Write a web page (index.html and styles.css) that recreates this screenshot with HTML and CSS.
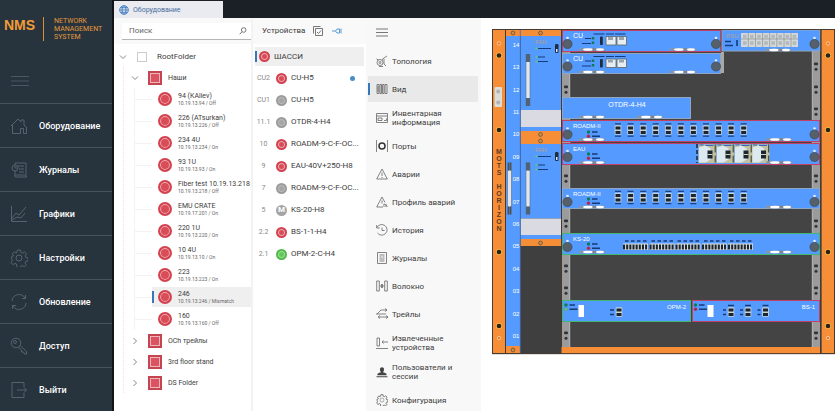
FILE: index.html
```html
<!DOCTYPE html>
<html lang="ru">
<head>
<meta charset="utf-8">
<meta name="viewport" content="width=device-width, initial-scale=1">
<title>NMS</title>
<link rel="stylesheet" href="styles.css">
</head>
<body>
<div class="app">
  <aside class="sidebar">
    <div class="brand"><span class="brand-mark">NMS</span><span class="brand-name">NETWORK<br>MANAGEMENT<br>SYSTEM</span></div>
    <button class="burger" type="button" aria-label="Меню"><svg width="18" height="12" viewBox="0 0 18 12"><path d="M0 1.500h18M0 6h18M0 10.500h18"/></svg></button>
    <nav class="main-nav">
      <a href="#"><svg class="ico" viewBox="0 0 18 18"><path d="M1 9 8 2l3 3V3h3v5l3 3M2.500 8v8.500h8v-5h3v5h3V11"/></svg>Оборудование</a>
      <a href="#"><svg class="ico" viewBox="0 0 18 18"><path d="M5 4V2h11v12M5 10v4h9.500q2 0 2 2H6q-1.500 0-1.500-2M8 5h6M9 8h5M9 11h5"/><circle cx="5" cy="7" r="3"/><path d="M5 5v2h2"/></svg>Журналы</a>
      <a href="#"><svg class="ico" viewBox="0 0 18 18"><path d="M1.500 1v15.500H17M2 13l4-5 3 2 7-8M2 15l5-3 4 1 4-5"/></svg>Графики</a>
      <a href="#"><svg class="ico" viewBox="0 0 18 18"><path d="M7.500 1h3l.5 2.500 1.500.6 2-1.300 2 2-1.300 2 .6 1.600 2.200.5v3l-2.400.5-.6 1.500 1.300 2-2 2-2-1.300-1.500.6-.6 2.300h-3L6.500 15 5 14.400 3 15.700l-2-2 1.300-2L1.700 10V7.500l2-.8L2.300 4.800l2-2 2 1.300z"/><circle cx="9" cy="9" r="3"/></svg>Настройки</a>
      <a href="#"><svg class="ico" viewBox="0 0 18 18"><path d="M2 8a7 7 0 0 1 13-3M16 10a7 7 0 0 1-13 3M15.500 2v3.500H12M2.500 16v-3.500H6"/></svg>Обновление</a>
      <a href="#"><svg class="ico" viewBox="0 0 18 18"><circle cx="6" cy="6" r="4.800"/><circle cx="5" cy="5" r="1.500"/><path d="m10 8.500 6.500 6v2.500h-2l-1-2h-2v-2L8.500 10.500"/></svg>Доступ</a>
      <a href="#"><svg class="ico" viewBox="0 0 18 18"><path d="M14 6V1.500H2v15h12V12M7 9h9.500M14 6.500 16.500 9 14 11.500"/></svg>Выйти</a>
    </nav>
  </aside>

  <div class="workspace">
    <header class="tabs">
      <a class="tab" href="#"><svg width="10" height="10" viewBox="0 0 10 10"><circle cx="5" cy="5" r="4.300"/><ellipse cx="5" cy="5" rx="2" ry="4.300"/><path d="M.7 5h8.600M1.500 2.700h7M1.500 7.300h7"/></svg>Оборудование</a>
    </header>
    <div class="panels">
      <section class="tree-panel">
        <div class="tree-head">
          <label class="search"><input type="text" placeholder="Поиск" aria-label="Поиск"><svg width="8" height="8" viewBox="0 0 8 8"><circle cx="4.700" cy="3" r="2.300"/><path d="M3 4.700.7 7.300"/></svg></label>
          <button type="button" class="plain" aria-label="Фильтр"><svg width="10" height="10" viewBox="0 0 10 10"><circle cx="5" cy="5" r="4.300"/><path d="M3 8.200h4"/></svg></button>
        </div>
        <ul class="tree">
          <li>
            <div class="row root"><button type="button" class="chev" aria-label="Свернуть"><svg viewBox="0 0 8 8"><path d="m1 2.500 3 3 3-3"/></svg></button><input type="checkbox" id="root"><label for="root">RootFolder</label></div>
            <ul class="folders">
              <li>
                <div class="row folder"><button type="button" class="chev" aria-label="Свернуть"><svg viewBox="0 0 8 8"><path d="m1 2.500 3 3 3-3"/></svg></button><i class="sq"></i>Наши</div>
                <ul class="leaves">
                  <li><a href="#"><i class="dot"></i><span>94 (KAliev)<small>10.19.13.94 / Off</small></span></a></li>
                  <li><a href="#"><i class="dot"></i><span>226 (ATsurkan)<small>10.19.13.226 / Off</small></span></a></li>
                  <li><a href="#"><i class="dot"></i><span>234 4U<small>10.19.13.234 / On</small></span></a></li>
                  <li><a href="#"><i class="dot"></i><span>93 1U<small>10.19.13.93 / On</small></span></a></li>
                  <li><a href="#"><i class="dot"></i><span>Fiber test 10.19.13.218<small>10.19.13.218 / Off</small></span></a></li>
                  <li><a href="#"><i class="dot"></i><span>EMU CRATE<small>10.19.17.201 / On</small></span></a></li>
                  <li><a href="#"><i class="dot"></i><span>220 1U<small>10.19.13.220 / On</small></span></a></li>
                  <li><a href="#"><i class="dot"></i><span>10 4U<small>10.19.13.10 / On</small></span></a></li>
                  <li><a href="#"><i class="dot"></i><span>223<small>10.19.13.223 / On</small></span></a></li>
                  <li><a href="#" class="selected"><i class="dot"></i><span>246<small>10.19.13.246 / Mismatch</small></span></a></li>
                  <li><a href="#"><i class="dot"></i><span>160<small>10.19.13.160 / Off</small></span></a></li>
                </ul>
              </li>
              <li><div class="row folder"><button type="button" class="chev" aria-label="Развернуть"><svg viewBox="0 0 8 8"><path d="m2.500 1 3 3-3 3"/></svg></button><i class="sq"></i>OCh трейлы</div></li>
              <li><div class="row folder"><button type="button" class="chev" aria-label="Развернуть"><svg viewBox="0 0 8 8"><path d="m2.500 1 3 3-3 3"/></svg></button><i class="sq"></i>3rd floor stand</div></li>
              <li><div class="row folder"><button type="button" class="chev" aria-label="Развернуть"><svg viewBox="0 0 8 8"><path d="m2.500 1 3 3-3 3"/></svg></button><i class="sq"></i>DS Folder</div></li>
            </ul>
          </li>
        </ul>
      </section>

      <section class="devices">
        <div class="dev-head"><h2>Устройства</h2>
          <button type="button" class="plain" aria-label="Выбрать"><svg width="10" height="10" viewBox="0 0 10 10"><path d="M2.500 2.500h7v7h-7zM.5 7.500v-7h7M4 6l1.500 1.500L8 4.500"/></svg></button>
          <button type="button" class="plain blue" aria-label="Подключение"><svg width="10" height="10" viewBox="0 0 10 10"><path d="M0 5h3.500M3.500 5 5 3h2.500v4H5zM9 2.500v5"/></svg></button>
        </div>
        <ul class="dev-list">
          <li class="chassis"><a href="#" class="selected"><i class="dot"></i>ШАССИ</a></li>
          <li><a href="#"><b>CU2</b><i class="dot"></i>CU-H5<i class="mark"></i></a></li>
          <li><a href="#"><b>CU1</b><i class="dot gray"></i>CU-H5</a></li>
          <li><a href="#"><b>11.1</b><i class="dot gray"></i>OTDR-4-H4</a></li>
          <li><a href="#"><b>10</b><i class="dot"></i>ROADM-9-C-F-OC...</a></li>
          <li><a href="#"><b>9</b><i class="dot"></i>EAU-40V+250-H8</a></li>
          <li><a href="#"><b>7</b><i class="dot gray"></i>ROADM-9-C-F-OC...</a></li>
          <li><a href="#"><b>5</b><i class="dot letter">M</i>KS-20-H8</a></li>
          <li><a href="#"><b>2.2</b><i class="dot"></i>BS-1-1-H4</a></li>
          <li><a href="#"><b>2.1</b><i class="dot green"></i>OPM-2-C-H4</a></li>
        </ul>
      </section>

      <nav class="side-menu">
        <button class="burger" type="button" aria-label="Меню"><svg width="12" height="9" viewBox="0 0 12 9"><path d="M0 1h12M0 4.500h12M0 8h12"/></svg></button>
        <a href="#"><svg class="ico" viewBox="0 0 12 12"><circle cx="4" cy="7.500" r="3"/><circle cx="4" cy="7.500" r="1"/><path d="M5.500 5 8 3l3-2M.5 4l2 1M8 4v5l2 2M3 11.500h4"/></svg>Топология</a>
        <a href="#" class="selected"><svg class="ico" viewBox="0 0 12 12"><path d="M1 1.500h2v9H1zM4 1.500h1.500v9H4zM6.500 1.500H8v9H6.500zM9 1.500h2v9H9zM2 3v6"/></svg>Вид</a>
        <a href="#" class="two"><svg class="ico" viewBox="0 0 12 12"><path d="M.5 1.500h11v9H.5zM.5 4h11M2 6h4v2.500H2zM8 8.500h2.500v-2"/></svg>Инвентарная информация</a>
        <a href="#"><svg class="ico" viewBox="0 0 12 12"><path d="M.5 0v12M11.500 0v12"/><circle class="heavy" cx="6" cy="6" r="3"/></svg>Порты</a>
        <a href="#"><svg class="ico" viewBox="0 0 12 12"><path d="M6 1 .7 11h10.600zM6 4.500v3.500M6 9v1"/></svg>Аварии</a>
        <a href="#"><svg class="ico" viewBox="0 0 12 12"><path d="M7 11H.7L6 1l3 5.500M6 4.500v3M7 9l2-1 2.500 3M8 11V9.500M10 11V8"/></svg>Профиль аварий</a>
        <a href="#"><svg class="ico" viewBox="0 0 12 12"><path d="M1 3.500A5.300 5.300 0 1 1 1.500 9M.7 1v3h3M6 3.500v3h2.500"/></svg>История</a>
        <a href="#"><svg class="ico" viewBox="0 0 12 12"><path d="M1.500.5h9v11h-9zM3.500 3h5M3.500 5h2M6.500 5h2M3.500 7h5M3.500 9h5"/></svg>Журналы</a>
        <a href="#"><svg class="ico" viewBox="0 0 12 12"><path d="M.7 1h2.600v10H.7zM8.700 1h2.600v10H8.700zM3.500 6h1.800M6.700 6h1.800M5.500 4v4M6.500 4v4"/></svg>Волокно</a>
        <a href="#"><svg class="ico" viewBox="0 0 12 12"><path d="M0 6h10M3 9h9M1 6l4-4h6M9 .5 11 2 9 3.500M10 7.500 12 9l-2 1.500M4 7.500 2 9l2 1.500"/></svg>Трейлы</a>
        <a href="#" class="two"><svg class="ico" viewBox="0 0 12 12"><path d="M1 1h2.500v8H1zM0 11.500h12M12 5H6M7.500 3.500 6 5l1.500 1.500"/></svg>Извлеченные устройства</a>
        <a href="#" class="two"><svg class="ico solid" viewBox="0 0 12 12"><path d="M6 1.200c2.500 0 2.500 3 1 5 2.500.5 3.700 1 3.700 3H1.300c0-2 1.200-2.500 3.700-3-1.500-2-1.500-5 1-5zM.5 10.200h11v1H.5z"/></svg>Пользователи и сессии</a>
        <a href="#"><svg class="ico" viewBox="0 0 18 18"><path stroke-width="1.300" d="M7.500 1h3l.5 2.500 1.500.6 2-1.300 2 2-1.300 2 .6 1.600 2.200.5v3l-2.400.5-.6 1.500 1.300 2-2 2-2-1.300-1.500.6-.6 2.300h-3L6.500 15 5 14.400 3 15.700l-2-2 1.300-2L1.700 10V7.500l2-.8L2.300 4.800l2-2 2 1.300z"/><circle cx="9" cy="9" r="3"/></svg>Конфигурация</a>
      </nav>

      <main class="view">
        <svg class="rack" viewBox="491 28 344 327" role="img" aria-label="MOTS HORIZON">
          <defs>
            <g id="screw"><circle r="3" fill="#f5c04a"/><circle r="2.300" fill="#2a2118"/></g>
            <g id="ring"><circle r="1.700" fill="#e8742a" stroke="#ffd9b0" stroke-width=".8"/></g>
            <g id="bolt"><circle r="1.900" fill="#d98a3c" stroke="#6b5a48" stroke-width=".9"/></g>
            <g id="knob"><circle cy="-6" r="1.300" fill="#e8f0ff"/><circle r="4.600" fill="#55606b" stroke="#39434e" stroke-width=".6"/></g>
            <g id="feet"><rect x="-9" y="-1.300" width="26" height="2.600" rx="1.300" fill="#8996a6"/><ellipse rx="5" ry="1.300" fill="#fff"/><ellipse cx="12" rx="4" ry="1.300" fill="#fff"/><rect x="4.500" y="-1.300" width="3.500" height="2.600" fill="#7a8694"/></g>
            <g id="port"><rect x="-3.300" y="-4.800" width="6.600" height="9.600" rx="1" fill="#c9d3d6"/><path d="M-2.500-3.500h5v3h-5zM-2.500 1h5v3h-5z" fill="#1c2630"/></g>
            <g id="port-tall"><use href="#port"/><path d="M-3-6.200h6M-3 6.200h6" stroke="#1d3f7a" stroke-width="1.200"/></g>
            <g id="ports"><use href="#port-tall"/><use href="#port-tall" x="12.600"/><use href="#port-tall" x="25.200"/><use href="#port-tall" x="37.700"/><use href="#port-tall" x="50.300"/><use href="#port-tall" x="62.900"/><use href="#port-tall" x="75.400"/><use href="#port-tall" x="88"/><use href="#port-tall" x="100.600"/><use href="#port-tall" x="113.100"/><use href="#port-tall" x="125.700"/></g>
            <g id="leds"><circle r="1.700" fill="#0d7a58"/><circle cy="4.200" r="1.700" fill="#b5264f"/><path d="M3.500 0h5.500M3.500 4.200h8" stroke="#173a78" stroke-width="1.400"/></g>
            <g id="holes"><rect x="-2" y="-1.500" width="4" height="2.800" rx="1" fill="#30343a"/><circle cy="5.200" r="1.500" fill="#30343a"/></g>
            <g id="handle"><rect x="-2.300" width="4.600" height="52" fill="#5c7088"/><rect x="-1.700" y="8" width="3.400" height="36" fill="#e3e6ea"/><path d="M-1 0v8M1 0v8M-1 44v8M1 44v8" stroke="#3b4856" stroke-width=".7"/></g>
            <g id="fan"><text class="tan" x="-6" y="3">FAN</text><path d="M-3 7.500h13M-3 16h7M-3 20.500h10" stroke="#173a78" stroke-width="1.200"/><g fill="#5bbf94"><circle cx="-4.500" cy="7.500" r="1.200"/><circle cx="-4.500" cy="16" r="1.200"/><circle cx="-4.500" cy="20.500" r="1.200"/></g><rect x="14" y="3" width="3.500" height="9" rx="1.200" fill="#1f2c3d"/><rect x="15" y="8" width="1.500" height="3" fill="#dfe6ee"/></g>
            <g id="cu"><use href="#knob" x="567.500" y="44"/><use href="#knob" x="716" y="44"/><text class="name" x="573" y="38">CU</text><path d="M585 38.500h6M582 43.500h9" stroke="#173a78" stroke-width="1.200"/><path d="M593 37v8" stroke="#0d7a58" stroke-width="2.500" stroke-dasharray="2.500 2"/><path d="M593.500 34h32" stroke="#173a78" stroke-width="1.200" stroke-dasharray="11 1.500 8 1"/><rect x="600" y="36.500" width="2.800" height="8.500" rx=".8" fill="#1f2c3d"/><path d="M606 36.500h10v8.500h-10zM617 36.500h9.500v8.500H617z" fill="#e8edf0" stroke="#59646c" stroke-width=".8"/><path d="M608 37v3h5v-3M619 37v3h5v-3" fill="#9aa5ab"/><use href="#feet" x="588" y="49.500"/><use href="#feet" x="679" y="49.500"/></g>
            <g id="comb"><rect width="25" height="6.500" fill="#dfe5e6"/><path d="M0 3.500h25" stroke="#1c2630" stroke-width="5" stroke-dasharray="2.100 1.050"/><path d="M2-2.500h23" stroke="#173a78" stroke-width="1.300" stroke-dasharray="3.500 2.500"/></g>
            <g id="amp"><rect width="17.500" height="18.500" fill="#c2c2a2"/><path d="M.5 3 7 1l5 3v11l-5 3H.5z" fill="#dceaf0"/><path d="M1 .5h4M7 1h8" stroke="#3969b5"/><rect x="9" y="6" width="5" height="8" fill="#1c2630"/><path d="M9 10h5" stroke="#cfd3c0"/><path d="M16.700 0v8M16.700 11v7" stroke="#33372a" stroke-width="1"/></g>
          </defs>
          <rect x="492" y="29" width="343" height="325" fill="#3f3f3f"/>
          <path d="M492.500 30H505v323h-12.500zM821.500 30H834v323h-12.500zM506 30h55v6h-55zM506 346h14v7h-14zM520.500 131H561v13h-40.500zM520.500 239H561v7h-40.500zM561.500 347H820v6.500H561.500z" fill="#f58e36"/>
          <path d="M506 36h14v310h-14zM520.500 36H561v74h-40.500zM520.500 127H561v4h-40.500zM520.500 144H561v74.500h-40.500zM520.500 235H561v4h-40.500z" fill="#559bff"/>
          <path d="M520.500 110H561v17h-40.500zM520.500 218.500H561V235h-40.500z" fill="#d9dae2"/>
          <path d="M520.300 30v323" stroke="#3c6fc0" stroke-width=".8"/>
          <path d="M562 30h8v317h-8zM812 30h8v317h-8z" fill="#9b9b9b"/>
          <path d="M570 30v317M812 30v317" stroke="#d0d0d0" stroke-width=".7"/>
          <rect x="570.500" y="30" width="241" height="316.500" fill="#444"/>
          <use href="#ring" x="499" y="43.500"/><use href="#screw" x="499" y="55.500"/><use href="#screw" x="499" y="130"/><use href="#screw" x="499" y="252"/><use href="#screw" x="499" y="326"/><use href="#ring" x="499" y="338"/>
          <use href="#ring" x="828" y="43.500"/><use href="#screw" x="828" y="55.500"/><use href="#screw" x="828" y="130"/><use href="#screw" x="828" y="252"/><use href="#screw" x="828" y="326"/><use href="#ring" x="828" y="338"/>
          <rect x="494.500" y="87" width="7.500" height="20" rx="1" fill="#dcdcd8"/><circle cx="498.200" cy="91.500" r="1.900" fill="#aeb2b6"/><circle cx="498.200" cy="102.500" r="1.900" fill="#aeb2b6"/>
          <use href="#bolt" x="513" y="33"/><use href="#bolt" x="540.500" y="33"/><use href="#bolt" x="540.500" y="134.500"/><use href="#bolt" x="540.500" y="141"/><use href="#bolt" x="540.500" y="243"/><use href="#bolt" x="513" y="350"/>
          <text class="side" x="499" y="148">MOTS HORIZON</text>
          <g class="slots"><text x="516" y="46.500">14</text><text x="516" y="69">13</text><text x="516" y="91.500">12</text><text x="516" y="113.500">11</text><text x="516" y="136">10</text><text x="516" y="158.500">09</text><text x="516" y="181">08</text><text x="516" y="203.500">07</text><text x="516" y="225.500">06</text><text x="516" y="248">05</text><text x="516" y="270.500">04</text><text x="516" y="293">03</text><text x="516" y="315.500">02</text><text x="516" y="337.500">01</text></g>
          <use href="#handle" x="528" y="54"/><use href="#handle" x="528" y="162.500"/><use href="#handle" x="509.500" y="162.500"/>
          <use href="#fan" x="541" y="41"/><use href="#fan" x="541" y="149"/>
          <use href="#holes" x="566" y="87"/><use href="#holes" x="566" y="176"/><use href="#holes" x="566" y="221"/><use href="#holes" x="566" y="266"/><use href="#holes" x="566" y="288"/><use href="#holes" x="566" y="333"/>
          <use href="#holes" x="816" y="64"/><use href="#holes" x="816" y="87"/><use href="#holes" x="816" y="109"/><use href="#holes" x="816" y="176"/><use href="#holes" x="816" y="221"/><use href="#holes" x="816" y="266"/><use href="#holes" x="816" y="288"/><use href="#holes" x="816" y="333"/>
          <g class="card"><rect class="red" x="562.500" y="30.500" width="158" height="21"/><rect x="562.500" y="53.500" width="158" height="20"/><rect x="722" y="30" width="98" height="21" stroke="none"/><rect x="562.500" y="97.500" width="128" height="21"/><rect class="red" x="562.500" y="120.500" width="257" height="21"/><rect class="red" x="562.500" y="143.500" width="257" height="21"/><rect x="562.500" y="188.500" width="257" height="20"/><rect class="green" x="562.500" y="233.500" width="257" height="21"/><rect class="green" x="562.500" y="300.500" width="128" height="21"/><rect class="red" x="692.500" y="300.500" width="127" height="21"/></g>
          <rect x="721" y="52" width="3" height="21" fill="#a8a8a8"/>
          <use href="#cu"/><use href="#cu" y="22.500"/>
          <text class="tan" x="726" y="37.500">PSU</text><path d="M725 41.500h6M725 45.500h8M737 40v6" stroke="#173a78" stroke-width="1.600"/>
          <rect x="741" y="33" width="57" height="14" fill="#d4d7d8"/><path d="M748.300 33v14M755.500 33v14M762.600 33v14M769.700 33v14M776.800 33v14M784 33v14M791 33v14M741 39h57" stroke="#878f95" stroke-width=".7"/><path d="M743 36.500h54M743 43h54" stroke="#b4b8ba" stroke-width="3.500" stroke-dasharray="3.500 3.600"/>
          <use href="#feet" x="774" y="50"/><use href="#knob" x="814.500" y="44"/>
          <text class="big" x="627" y="107">OTDR-4-H4</text><use href="#feet" x="588" y="117"/><use href="#feet" x="646" y="117"/>
          <use href="#knob" x="567.500" y="134.500"/><use href="#knob" x="814.500" y="134.500"/><text class="name sm" x="573" y="128">ROADM-II</text><use href="#leds" x="588.500" y="132"/><use href="#ports" x="618" y="130"/><use href="#feet" x="588" y="139.500"/><use href="#feet" x="775" y="139.500"/>
          <use href="#knob" x="567.500" y="157"/><use href="#knob" x="814.500" y="157"/><text class="name sm" x="573" y="150.500">EAU</text><use href="#leds" x="588.500" y="154"/><path d="M697 144v19" stroke="#1c2630" stroke-width="1.500" stroke-dasharray="4 2"/><use href="#amp" x="698.500" y="144.500"/><use href="#amp" x="716.500" y="144.500"/><use href="#amp" x="734.500" y="144.500"/><use href="#amp" x="752" y="144.500"/><use href="#feet" x="588" y="162.500"/><use href="#feet" x="775" y="162.500"/>
          <use href="#knob" x="567.500" y="202"/><use href="#knob" x="814.500" y="202"/><text class="name sm" x="573" y="195.500">ROADM-II</text><use href="#leds" x="588.500" y="199"/><use href="#ports" x="618" y="197.500"/><use href="#feet" x="588" y="207"/><use href="#feet" x="775" y="207"/>
          <use href="#knob" x="567.500" y="247"/><use href="#knob" x="814.500" y="247"/><text class="name sm" x="573" y="240.500">KS-20</text><use href="#leds" x="588.500" y="244"/><use href="#comb" x="623" y="243.500"/><use href="#comb" x="649.500" y="243.500"/><use href="#comb" x="675.500" y="243.500"/><use href="#comb" x="702" y="243.500"/><use href="#comb" x="728" y="243.500"/><use href="#feet" x="588" y="252"/><use href="#feet" x="775" y="252"/>
          <use href="#leds" x="566" y="305"/><circle cx="566" cy="309.200" r="1.800" fill="#5bbf94"/><rect x="578.500" y="305" width="5.500" height="12" fill="#fff"/><path d="M610 310h4M610 314.500h4" stroke="#173a78" stroke-width="1.500"/><use href="#port" x="619" y="312"/><text class="name sm end" x="686" y="308.500">OPM-2</text>
          <use href="#leds" x="695.500" y="305"/><rect x="707.500" y="305" width="6" height="12" fill="#fff"/><path d="M723 310h3M723 314.500h3M740 310h3M740 314.500h3M757.500 310h3M757.500 314.500h3M728 305.500h6M745 305.500h6M762.500 305.500h6" stroke="#173a78" stroke-width="1.300"/><use href="#port" x="731" y="312"/><use href="#port" x="748" y="312"/><use href="#port" x="765.500" y="312"/><text class="name sm end" x="815" y="308.500">BS-1</text>
          <path d="M492.500 354V29.500h342M505.500 30v323.500M820.800 30v323.500M561.500 30v317M492 353.700h343M834.500 30v324" fill="none" stroke="#4a3a30" stroke-width=".9"/>
        </svg>
      </main>
    </div>
  </div>
</div>
</body>
</html>
```
FILE: styles.css
```css
* { box-sizing: border-box; }
body { margin: 0; font: 8px/10px Roboto, "Open Sans", sans-serif; color: #3c3c3c; background: #fff; }
ul { list-style: none; margin: 0; padding: 0; }
a { color: inherit; text-decoration: none; }
svg { display: block; flex: none; fill: none; stroke: currentColor; stroke-width: 1; }
button { border: 0; padding: 0; background: none; color: inherit; font: inherit; }
i { font-style: normal; }

.app { display: flex; height: 100vh; overflow: hidden; }

/* left navigation */
.sidebar { flex: none; width: 114px; background: #27333d; border-right: 2px solid #101417; }
.brand { display: flex; align-items: center; height: 58px; padding-left: 4px; color: #e59a3c; }
.brand-mark { width: 39px; font: bold 14px/16px "Liberation Sans", sans-serif; color: #f39c35; padding-bottom: 8px; }
.brand-name { border-left: 1px solid #d89038; padding: 0 0 0 10px; font-size: 7px; line-height: 8px; }
.sidebar .burger { display: flex; align-items: center; height: 45px; padding-left: 11px; color: #4a5864; }
.main-nav a { display: flex; align-items: center; gap: 11px; height: 44px; padding-left: 10px; border-top: 1px solid #46535d; color: #fff; font-size: 9px; font-weight: 500; }
.main-nav .ico { width: 18px; height: 18px; color: #56636e; }

/* top tabs */
.workspace { flex: 1; min-width: 0; display: flex; flex-direction: column; }
.tabs { flex: none; height: 18px; padding-top: 1px; background: #1a2025; }
.tab { display: flex; align-items: center; gap: 4px; width: 109px; height: 17px; padding-left: 5px; background: #e9ebf0; color: #476c9f; font-size: 7px; }
.tab svg { color: #4a82c4; }

.panels { flex: 1; min-height: 0; display: flex; }

/* equipment tree */
.tree-panel { flex: none; width: 139px; border-right: 2px solid #f3f3f3; background: #fff; }
.tree-head { display: flex; align-items: center; gap: 7px; height: 26px; padding: 0 5px 0 8px; background: #f9f9f9; }
.search { flex: 1; display: flex; align-items: center; height: 17px; padding: 0 4px 0 7px; background: #fff; border-bottom: 1px solid #b5b5b5; }
.search input { flex: 1; min-width: 0; border: 0; padding: 0; outline: 0; background: none; font: inherit; }
.search input::placeholder { color: #666; opacity: 1; }
.search svg { color: #777; }
.plain { color: #777; }
.plain.blue { color: #5a9bd4; }
.tree { padding-top: 2px; }
.row { display: flex; align-items: center; height: 21px; }
.root { gap: 10px; padding-left: 5px; }
.root input { appearance: none; width: 10px; height: 10px; margin: 0; border: 1px solid #ccc; background: #fff; }
.chev { width: 8px; height: 8px; color: #888; }
.folders { margin-left: 9px; border-left: 1px dotted #f0e4e6; }
.folder { padding-left: 7px; gap: 6px; font-size: 7px; }
.folder .chev { margin-right: 3px; }
.leaves { margin-left: 10px; border-left: 1px solid #f3f3f3; }
.leaves li { display: flex; align-items: center; height: 22px; }
.leaves li::before { content: ""; width: 17px; height: 1px; background: #f3f3f3; }
.leaves a { flex: 1; display: flex; align-items: center; gap: 6px; height: 20px; padding-left: 4px; border-left: 2px solid transparent; font-size: 7px; line-height: 8px; white-space: nowrap; }
.leaves small { display: block; font-size: 5px; line-height: 6px; color: #666; }
.selected { background: #efefef; }
.leaves a.selected { border-image: linear-gradient(transparent 25%, #3577b8 25% 75%, transparent 75%) 1 / 0 0 0 2px; }
.sq { width: 14px; height: 14px; background: #db5360; border: 2px solid #c4444f; box-shadow: inset 0 0 0 1px #f0b5ba; }
.dot { flex: none; width: 14px; height: 14px; border-radius: 50%; border: 2px solid #d3434f; background: #d94d59; box-shadow: inset 0 0 0 1px #efb0b5; }

/* device list */
.devices { flex: none; width: 113px; background: #fff; }
.dev-head { display: flex; align-items: center; gap: 9px; height: 26px; padding-left: 9px; background: #f9f9f9; }
.dev-head h2 { width: 42px; margin: 0; font-size: 8px; line-height: 10px; font-weight: 400; }
.dev-list { padding: 2px 0 0 2px; }
.dev-list a { display: flex; align-items: center; height: 22px; width: 109px; gap: 4px; white-space: nowrap; }
.dev-list .chassis a { height: 19px; margin: 1px 0; padding-left: 2px; border-left: 2px solid; border-image: linear-gradient(transparent 25%, #3577b8 25% 75%, transparent 75%) 1 / 0 0 0 2px; }
.dev-list b { width: 17px; font-weight: 400; text-align: center; font-size: 7px; color: #888; }
.dev-list .dot { width: 11px; height: 11px; }
.dev-list .gray { background: #a5a5a5; border-color: #9b9b9b; box-shadow: inset 0 0 0 1px #bdbdbd; }
.dev-list .green { background: #5fc657; border-color: #52b84b; box-shadow: inset 0 0 0 1px #a6e3a0; }
.dev-list .letter { display: grid; place-items: center; border: 0; background: #a5a5a5; box-shadow: none; color: #fff; font-size: 8px; font-weight: 700; }
.dev-list .mark { width: 5px; height: 5px; margin: 0 9px 0 auto; border-radius: 50%; background: #4a8cc8; }

/* section menu */
.side-menu { flex: none; display: flex; flex-direction: column; gap: 2px; width: 115px; padding: 0 3px 0 2px; background: #f8f8f8; }
.side-menu .burger { flex: none; height: 28px; padding-left: 8px; color: #777; }
.side-menu a { flex: none; display: flex; align-items: center; gap: 4px; height: 26px; padding: 0 16px 0 6px; border-left: 2px solid transparent; line-height: 9px; }
.side-menu a.two { height: 27px; }
.side-menu a.selected { background: #e9e9e9; border-image: linear-gradient(transparent 30%, #3577b8 30% 70%, transparent 70%) 1 / 0 0 0 2px; }
.side-menu .ico { width: 12px; height: 12px; color: #666; stroke-width: .8; }
.side-menu .solid { fill: #444; stroke: none; }
.heavy { stroke: #333; stroke-width: 1.5; }

/* rack drawing */
.view { flex: 1; min-width: 0; padding: 10px 0 0 10px; background: #fff; }
.rack { width: 100%; height: auto; stroke: none; }
.rack text { font-family: "Liberation Sans", sans-serif; fill: #fff; }
.rack .slots text { font-size: 6px; text-anchor: middle; }
.rack .side { writing-mode: vertical-rl; text-orientation: upright; font-size: 7px; font-weight: 700; fill: #5a3a2a; }
.rack .name { font-size: 7px; }
.rack .name.sm { font-size: 6px; }
.rack .name.end { text-anchor: end; }
.rack .big { font-size: 7px; text-anchor: middle; }
.rack .tan { font-size: 6px; fill: #b5a089; }
.card rect { fill: #559bff; stroke: #8fa5c0; stroke-width: 1; }
.card .red { stroke: #c23f66; }
.card .green { stroke: #3fb873; }
```
